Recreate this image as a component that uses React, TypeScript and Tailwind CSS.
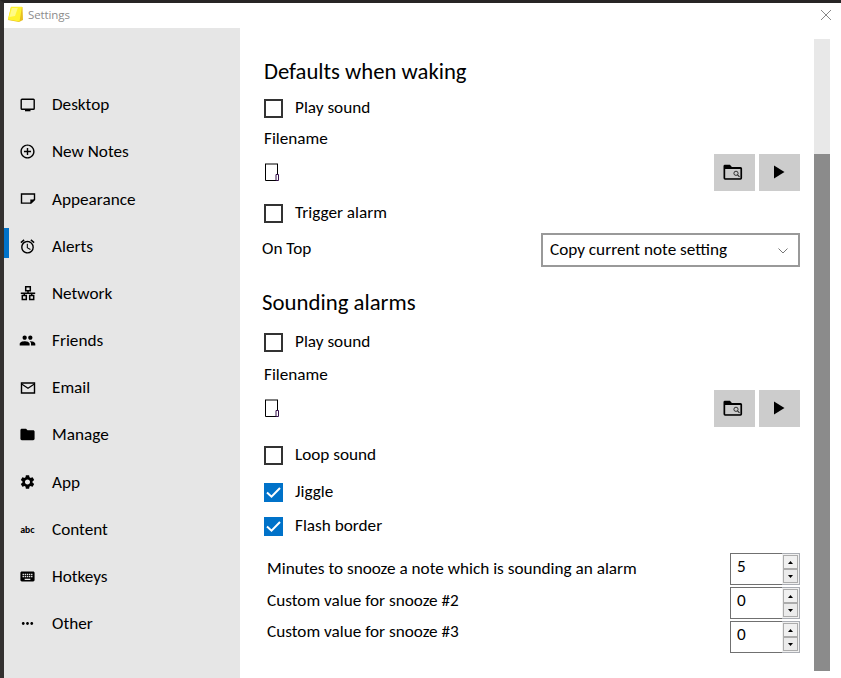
import React from "react";
import {
  MdAddCircleOutline, MdAlarm, MdGroup, MdFolder, MdSettings, MdKeyboard, MdMoreHoriz,
} from "react-icons/md";

const DesktopIcon = () => (
  <svg viewBox="0 0 16 16" className="size-4" fill="none" stroke="#000" strokeWidth="1.4">
    <rect x="1.2" y="2.2" width="13" height="10" rx="0.8" />
    <path d="M5 13.300h5.500" strokeWidth="2" />
  </svg>
);

const NoteIcon = () => (
  <svg viewBox="0 0 16 16" className="size-4">
    <path d="M1.500 3h13v5.600l-3.500 3.500h-9.500z" fill="none" stroke="#000" strokeWidth="1.4" />
    <path d="M10.300 8.600h4.500L10.300 12.800z" fill="#000" />
  </svg>
);

const NetworkIcon = () => (
  <svg viewBox="0 0 16 16" className="size-4" fill="none" stroke="#000" strokeWidth="1.5">
    <path d="M5.700 1.700h4.600v4H5.700zM2.300 10.600h4v3.800h-4zM9.700 10.600h4v3.800h-4zM8 5.700v2.500M.8 8.200h14.400M4.300 8.200v2.400M11.700 8.200v2.400" />
  </svg>
);

const MailIcon = () => (
  <svg viewBox="0 0 16 16" className="size-4" fill="none" stroke="#000" strokeWidth="1.4">
    <path d="M1.500 3h13v10h-13z" />
    <path d="M2 4.200l6 4 6-4" strokeWidth="1.2" />
  </svg>
);

const items: { label: string; icon: React.ReactNode; active?: boolean }[] = [
  { label: "Desktop", icon: <DesktopIcon /> },
  { label: "New Notes", icon: <MdAddCircleOutline size={17} /> },
  { label: "Appearance", icon: <NoteIcon /> },
  { label: "Alerts", icon: <MdAlarm size={17} />, active: true },
  { label: "Network", icon: <NetworkIcon /> },
  { label: "Friends", icon: <MdGroup size={17} /> },
  { label: "Email", icon: <MailIcon /> },
  { label: "Manage", icon: <MdFolder size={17} /> },
  { label: "App", icon: <MdSettings size={18} /> },
  { label: "Content", icon: <span className="font-['Lato',sans-serif] text-[9px] font-black leading-none">abc</span> },
  { label: "Hotkeys", icon: <MdKeyboard size={17} /> },
  { label: "Other", icon: <MdMoreHoriz size={17} /> },
];

function Check({ label, checked = false, className = "" }: { label: string; checked?: boolean; className?: string }) {
  return (
    <div className={`flex items-center pl-6 ${className}`}>
      {checked ? (
        <span className="flex size-[19px] items-center justify-center bg-[#0072c9]">
          <svg viewBox="0 0 19 19" className="size-[19px]" fill="none" stroke="#fff" strokeWidth="2">
            <path d="M3 9.500l4.500 4.200L16 5" />
          </svg>
        </span>
      ) : (
        <span className="size-[19px] border-2 border-[#333]" />
      )}
      <span className="ml-3">{label}</span>
    </div>
  );
}

function FileRow({ className = "" }: { className?: string }) {
  return (
    <div className={`flex h-[37px] items-center pl-6 ${className}`}>
      <svg className="-mt-0.5" width="16" height="20" viewBox="0 0 16 20" fill="none">
        <path d="M1 2h13" stroke="#555" strokeWidth="1.500" />
        <path d="M1.500 2v16.500h12V2" stroke="#000" />
        <path d="M12 12.500v6h2.500v-6z" fill="#fff" stroke="#35104a" />
      </svg>
      <div className="ml-auto flex gap-1">
        <button className="flex h-[37px] w-[41px] items-center justify-center bg-[#ccc] pr-1">
          <svg width="20" height="17" viewBox="0 0 20 17" fill="none">
            <path d="M.500 2.200Q.500.8 1.900.8h5l2 2.200h8.700q1.500 0 1.500 1.500V14q0 1.800-1.600 1.800H2.100Q.5 15.800.5 14z" fill="#000" />
            <path d="M2.200 5h15.200v9.200h-15.200z" fill="#ccc" />
            <circle cx="13" cy="9.300" r="2.100" stroke="#222" strokeWidth="0.900" />
            <path d="M14.500 10.800l2 2" stroke="#222" strokeWidth="1.100" />
          </svg>
        </button>
        <button className="flex h-[37px] w-[41px] items-center justify-center bg-[#ccc] pb-px pr-0.5">
          <svg width="12" height="14" viewBox="0 0 12 14"><path d="M1 .5L11.500 7 1 13.500z" /></svg>
        </button>
      </div>
    </div>
  );
}

function Spinner({ value }: { value: number }) {
  return (
    <div className="flex h-8 w-[70px] border border-[#707070]">
      <span className="w-[51px] pl-1.5 leading-[26px]">{value}</span>
      <div className="-my-px -mr-px flex w-[18px] flex-col border-y border-r border-[#aaadb3] bg-[#f0f0f0] py-px pl-px pr-px">
        <span className="flex h-3.5 items-center justify-center border border-[#acacac] bg-[#f0f0f0]">
          <svg width="5" height="3"><path d="M2.500 0L5 3H0z" /></svg>
        </span>
        <span className="flex h-3.5 items-center justify-center border border-[#acacac] bg-[#ebebeb]">
          <svg width="5" height="3"><path d="M0 0h5L2.500 3z" /></svg>
        </span>
      </div>
    </div>
  );
}

export default function App() {
  return (
    <div className="flex h-[678px] w-[841px] flex-col overflow-hidden border-l-4 border-t-[3px] border-l-[#333130] border-t-[#272525] bg-white font-['Carlito','Lato',sans-serif] text-[17.200px] text-black">
      <header className="flex h-[25px] shrink-0 items-center pb-0.5 pl-[3px] pr-[9px]">
        <svg width="17" height="17" viewBox="0 0 17 17">
          <path d="M4 1h11.500l.5 13-4 2-11-2z" fill="#e8bf20" />
          <path d="M4 .7h11L12.500 15.500.8 13.500z" fill="#fff32f" />
          <path d="M4.800 2h6L8 10l-5.500 1z" fill="#fffb86" />
        </svg>
        <span className="ml-1 font-['Open_Sans',sans-serif] text-[11.500px] tracking-[-0.1px] text-[#8c8c8c]">Settings</span>
        <svg className="ml-auto" width="12" height="12" viewBox="0 0 12 12" stroke="#888"><path d="M1 1l10 10M11 1L1 11" /></svg>
      </header>
      <div className="flex min-h-0 flex-1">
        <nav className="w-[236px] shrink-0 bg-[#e6e6e6] pt-[53px]">
          {items.map((it) => (
            <div key={it.label} className="flex h-[47.180px] items-center">
              <span className={`h-[30px] w-[5px] -mt-[7px] ${it.active ? "bg-[#0072c9]" : ""}`} />
              <span className="ml-2.5 flex w-[17px] items-center justify-center">{it.icon}</span>
              <span className="ml-4 pt-px">{it.label}</span>
            </div>
          ))}
        </nav>
        <main className="w-[560px] shrink-0 pt-7">
          <h2 className="h-8 pl-6 text-[22.700px] leading-[31px]">Defaults when waking</h2>
          <Check label="Play sound" className="h-10" />
          <div className="h-[22px] pl-6 leading-[21px]">Filename</div>
          <FileRow className="mt-1" />
          <Check label="Trigger alarm" className="mt-1 h-9" />
          <div className="mt-0.5 flex h-[34px] items-center pl-[22px]">
            <span className="-mt-[3px]">On Top</span>
            <div className="ml-auto flex h-[34px] w-[259px] items-center border-2 border-[#999] pl-[7px] pr-2.5">
              <span className="-mt-px">Copy current note setting</span>
              <svg className="ml-auto mt-0.5" width="10" height="6" viewBox="0 0 10 6" fill="none" stroke="#777"><path d="M.5.5L5 5 9.500.5" /></svg>
            </div>
          </div>
          <h2 className="mt-5 h-8 pl-[22px] text-[22.800px] leading-[31px]">Sounding alarms</h2>
          <Check label="Play sound" className="mt-[3px] h-10" />
          <div className="mt-0.5 h-[22px] pl-6 leading-[21px]">Filename</div>
          <FileRow className="mt-1" />
          <Check label="Loop sound" className="mt-2.5 h-9" />
          <Check label="Jiggle" checked className="mt-px h-9" />
          <Check label="Flash border" checked className="h-8" />
          <div className="mt-[11px] flex justify-between pl-[27px]">
            <div className="leading-[31.500px]">
              <div>Minutes to snooze a note which is sounding an alarm</div>
              <div>Custom value for snooze #2</div>
              <div>Custom value for snooze #3</div>
            </div>
            <div className="flex flex-col gap-0.5">
              <Spinner value={5} />
              <Spinner value={0} />
              <Spinner value={0} />
            </div>
          </div>
        </main>
        <div className="ml-3.5 mt-[11px] h-[632px] w-4 bg-[#e8e8e8] pt-[115px]">
          <div className="h-[517px] bg-[#8b8b8b]" />
        </div>
      </div>
    </div>
  );
}
